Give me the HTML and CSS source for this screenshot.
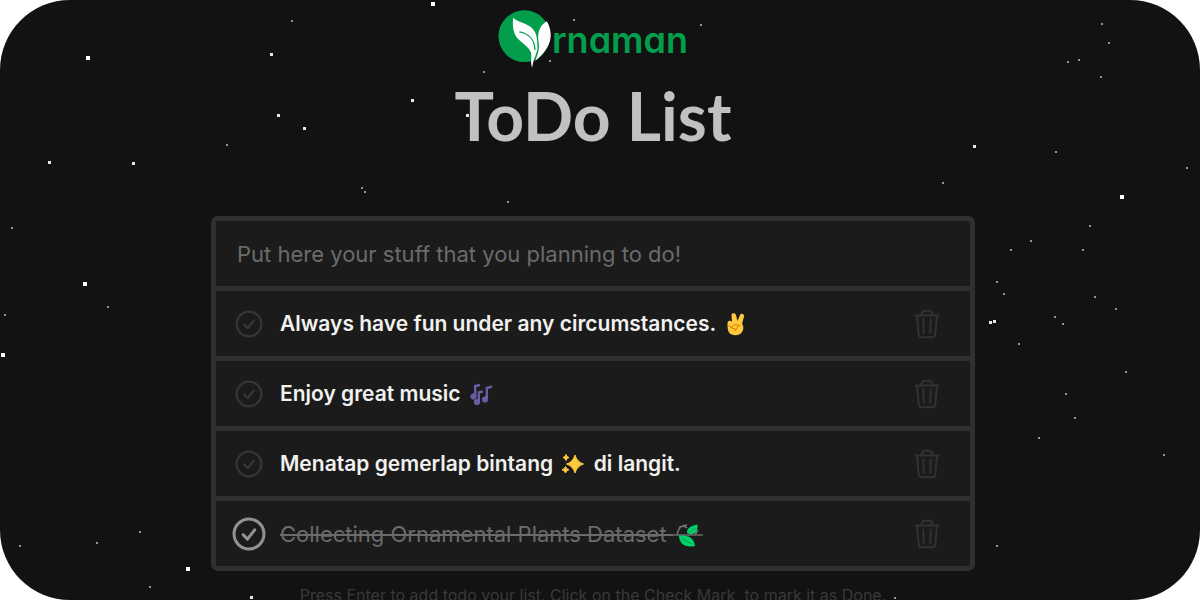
FILE: index.html
```html
<!DOCTYPE html>
<html lang="en">
<head>
<meta charset="utf-8">
<title>Ornaman ToDo List</title>
<link rel="stylesheet" href="styles.css">
</head>
<body>
<svg class="defs" width="0" height="0" aria-hidden="true">
  <symbol id="check" viewBox="0 0 28 28">
    <circle cx="14" cy="14" r="12.3"/>
    <path d="M9.2 14.6l3.5 3.6 6-7.6"/>
  </symbol>
  <symbol id="trash" viewBox="0 0 26 30">
    <path d="M1.5 6.5h23M7.5 6c.2-3 1.500-4.300 3.500-4.300h4c2 0 3.300 1.300 3.500 4.300M3 6.500l1.700 19c.2 2 1 2.800 3 2.800h10.600c2 0 2.800-.8 3-2.800l1.700-19M9.300 10.500l.4 13.500M16.700 10.500l-.4 13.500"/>
  </symbol>
</svg>
<div class="page">
  <svg class="stars" aria-hidden="true"></svg>
  <main class="content">
    <div class="logo">
      <svg class="logo-mark" viewBox="28 28 162 177" aria-hidden="true">
        <circle cx="107" cy="108" r="79" fill="#039e4c"/>
        <path fill="#fff" d="M73 52C88 68 118 66 136 90C147 105 147 128 147 145C146 160 135 175 131 204C124 186 131 174 127 157C120 139 98 129 84 112C71 95 71 70 73 52Z"/>
        <path fill="#fff" d="M175 62C184 74 189 95 187 112C184 140 162 166 140 184C148 165 153 150 151 129C146 98 152 77 175 62Z"/>
        <path d="M92 95C119 100 139 118 139 150" fill="none" stroke="#039e4c" stroke-width="4"/>
      </svg>
      <span class="logo-text">rnaman</span>
    </div>
    <h1 class="title">ToDo List</h1>
    <div class="board">
      <input class="entry" type="text" aria-label="New todo" placeholder="Put here your stuff that you planning to do!">
      <ul class="list">
        <li class="item">
          <span class="check"><input type="checkbox" id="t1"><svg><use href="#check"/></svg></span>
          <label class="label" for="t1">Always have fun under any circumstances. <svg class="emoji" viewBox="0 0 24 24" role="img" aria-label="victory hand"><path fill="#ffc83d" d="M3.500 12C3 8 7 8 8 10L7.500 3C7.500.5 11.500 .5 12 3L13.500 9L16 3C17 .8 20.500 2 20 4.500L18 12C20 14 19.500 18 18 20C15.500 24 8 24.500 5 20.500C3.500 18 3.500 15 3.500 12Z"/><path d="M4.500 13.500L7 15.500L11 12.500L16.500 14M7 15.500L12 17.500M14 14L11 19" fill="none" stroke="#d67d00"/></svg></label>
          <button class="remove" type="button" aria-label="Delete"><svg><use href="#trash"/></svg></button>
        </li>
        <li class="item">
          <span class="check"><input type="checkbox" id="t2"><svg><use href="#check"/></svg></span>
          <label class="label" for="t2">Enjoy great music <svg class="emoji" viewBox="0 0 24 24" role="img" aria-label="musical notes"><g fill="#6b5ca5" stroke="#6b5ca5"><circle cx="4.500" cy="14.500" r="2.700"/><circle cx="8" cy="20" r="2.700"/><circle cx="16" cy="17.500" r="2.700"/><path fill="none" stroke-width="2.400" d="M6.200 14V4L11 3M9.800 20V10.500L14 9.500M17.800 17V6L23 4.500"/></g></svg></label>
          <button class="remove" type="button" aria-label="Delete"><svg><use href="#trash"/></svg></button>
        </li>
        <li class="item">
          <span class="check"><input type="checkbox" id="t3"><svg><use href="#check"/></svg></span>
          <label class="label" for="t3">Menatap gemerlap bintang <svg class="emoji" viewBox="0 0 24 24" role="img" aria-label="sparkles"><path fill="#ffc83d" d="M14 3Q16 10 22.500 12Q16 14 14 21Q12 14 5.500 12Q12 10 14 3ZM5 2.500Q5.700 5 8 5.500Q5.700 6 5 8.500Q4.300 6 2 5.500Q4.300 5 5 2.500ZM4.500 14.500Q5.200 17 8 17.700Q5.200 18.500 4.500 21Q3.800 18.500 1 17.700Q3.800 17 4.500 14.500Z" stroke="#ffc83d" stroke-linejoin="round"/></svg> di langit.</label>
          <button class="remove" type="button" aria-label="Delete"><svg><use href="#trash"/></svg></button>
        </li>
        <li class="item">
          <span class="check"><input type="checkbox" id="t4" checked><svg><use href="#check"/></svg></span>
          <label class="label" for="t4">Collecting Ornamental Plants Dataset <svg class="emoji" viewBox="0 0 24 24" role="img" aria-label="leaves"><path d="M1 12C2 5 5 2 11 2M3 4.500C7 2 9 3 11 5M19 11.500L22 7" fill="none" stroke="#777" stroke-width="1.500"/><path d="M-4 12H27" stroke="#6b6b6b" stroke-width="1.500"/><path fill="#00d26a" d="M11 10C11 4 16 3 21.500 1.500C22 7 20 12 13 11ZM3 12.500C10 12 18 13 19 23C10 25 3 21 3 12.500Z"/><path d="M6 15.500L16 21M13 10L19 5" stroke="#00964b"/></svg></label>
          <button class="remove" type="button" aria-label="Delete"><svg><use href="#trash"/></svg></button>
        </li>
      </ul>
    </div>
    <p class="hint">Press Enter to add todo your list. Click on the Check Mark, to mark it as Done.</p>
  </main>
</div>
<script src="stars.js"></script>
</body>
</html>
```
FILE: styles.css
```css
* {
  box-sizing: border-box;
}

body {
  margin: 0;
  background: #fff;
  font-family: Inter, "Liberation Sans", sans-serif;
}

.defs {
  position: absolute;
}

.page {
  position: relative;
  height: 100vh;
  overflow: hidden;
  border-radius: 70px;
  background: #121212;
  padding: 10px 14px 0 0;
}

.stars {
  position: absolute;
  inset: 0;
  width: 100%;
  height: 100%;
  fill: #fff;
}

.content {
  position: relative;
  width: 100%;
  max-width: 764px;
  margin: 0 auto;
}

.logo {
  display: flex;
  justify-content: center;
  height: 58px;
}

.logo-mark {
  width: 54px;
  height: 58px;
}

.logo-text {
  color: #039e4c;
  font-size: 36px;
  font-weight: 600;
  line-height: 60px;
  font-feature-settings: "cv11";
}

.title {
  margin: 8px 0 60px;
  color: #c1c1c1;
  font-family: Lato, sans-serif;
  font-size: 66px;
  font-weight: 700;
  line-height: 80px;
  text-align: center;
}

.board {
  display: grid;
  gap: 5px;
  border: 5px solid #32302f;
  border-radius: 7px;
  background: #32302f;
}

.entry {
  width: 100%;
  height: 65px;
  border: 0;
  border-radius: 2px 2px 0 0;
  padding: 0 21px;
  background: #1b1b1b;
  color: #f1f1ef;
  font: 400 22px Inter, sans-serif;
  outline: 0;
}

.entry::placeholder {
  color: #6b6b6b;
  opacity: 1;
}

.list {
  display: grid;
  gap: 5px;
  margin: 0;
  padding: 0;
  list-style: none;
}

.item {
  display: flex;
  align-items: center;
  gap: 14px;
  height: 65px;
  padding: 0 30px 0 15px;
  background: #1b1b1b;
}

.check {
  display: grid;
  place-items: center;
  width: 35px;
  height: 35px;
}

.check > * {
  grid-area: 1 / 1;
}

.check input {
  width: 28px;
  height: 28px;
  margin: 0;
  opacity: 0;
}

.check svg {
  width: 28px;
  height: 28px;
  fill: none;
  stroke: #363636;
  stroke-width: 2.3;
  stroke-linecap: round;
  stroke-linejoin: round;
  pointer-events: none;
}

.check input:checked + svg {
  width: 34px;
  height: 34px;
  stroke: #929292;
  stroke-width: 2.5;
}

.label {
  flex: 1;
  color: #f1f1ef;
  font-size: 21px;
  font-weight: 600;
  line-height: 28px;
}

.check:has(:checked) + .label {
  color: #6b6b6b;
  font-size: 22px;
  font-weight: 400;
  text-decoration: line-through;
}

.emoji {
  width: 24px;
  height: 24px;
  margin: 0 3px;
  overflow: visible;
  vertical-align: -5px;
}

.remove {
  width: 26px;
  height: 30px;
  border: 0;
  padding: 0;
  background: none;
}

.remove svg {
  display: block;
  width: 26px;
  height: 30px;
  fill: none;
  stroke: #323232;
  stroke-width: 2;
  stroke-linecap: round;
  stroke-linejoin: round;
}

.hint {
  margin: 14px 0 0;
  color: #393939;
  font-size: 16px;
  line-height: 20px;
  text-align: center;
}
```
FILE: stars.js
```js
const small = [
  [292, 21], [227, 145], [12, 228], [5, 315], [108, 307], [20, 546], [97, 543], [140, 532],
  [150, 587], [484, 72], [574, 20], [701, 25], [550, 61], [508, 202], [362, 188], [365, 192],
  [1102, 24], [1109, 43], [1068, 62], [1079, 60], [1101, 77], [1056, 152], [943, 183],
  [1187, 168], [1090, 226], [1031, 241], [1011, 250], [1083, 250], [997, 282], [1004, 294],
  [1095, 297], [1055, 317], [1063, 324], [1019, 344], [1116, 309], [1126, 372], [1066, 394],
  [1075, 418], [1039, 438], [1164, 455], [997, 546], [895, 598]
];
const medium = [
  [271, 54], [278, 115], [49, 162], [133, 163], [304, 128], [412, 100], [467, 115],
  [974, 146], [990, 322], [994, 321], [251, 597]
];
const large = [[88, 58], [85, 284], [433, 4], [3, 355], [188, 569], [1122, 197]];

const sky = document.querySelector(".stars");

function drawStars(points, size, opacity) {
  for (const [x, y] of points) {
    const star = document.createElementNS("http://www.w3.org/2000/svg", "rect");
    star.setAttribute("x", x - Math.floor(size / 2));
    star.setAttribute("y", y - Math.floor(size / 2));
    star.setAttribute("width", size);
    star.setAttribute("height", size);
    star.setAttribute("opacity", opacity);
    sky.append(star);
  }
}

drawStars(small, 2, 0.55);
drawStars(medium, 3, 0.9);
drawStars(large, 4, 1);
```
